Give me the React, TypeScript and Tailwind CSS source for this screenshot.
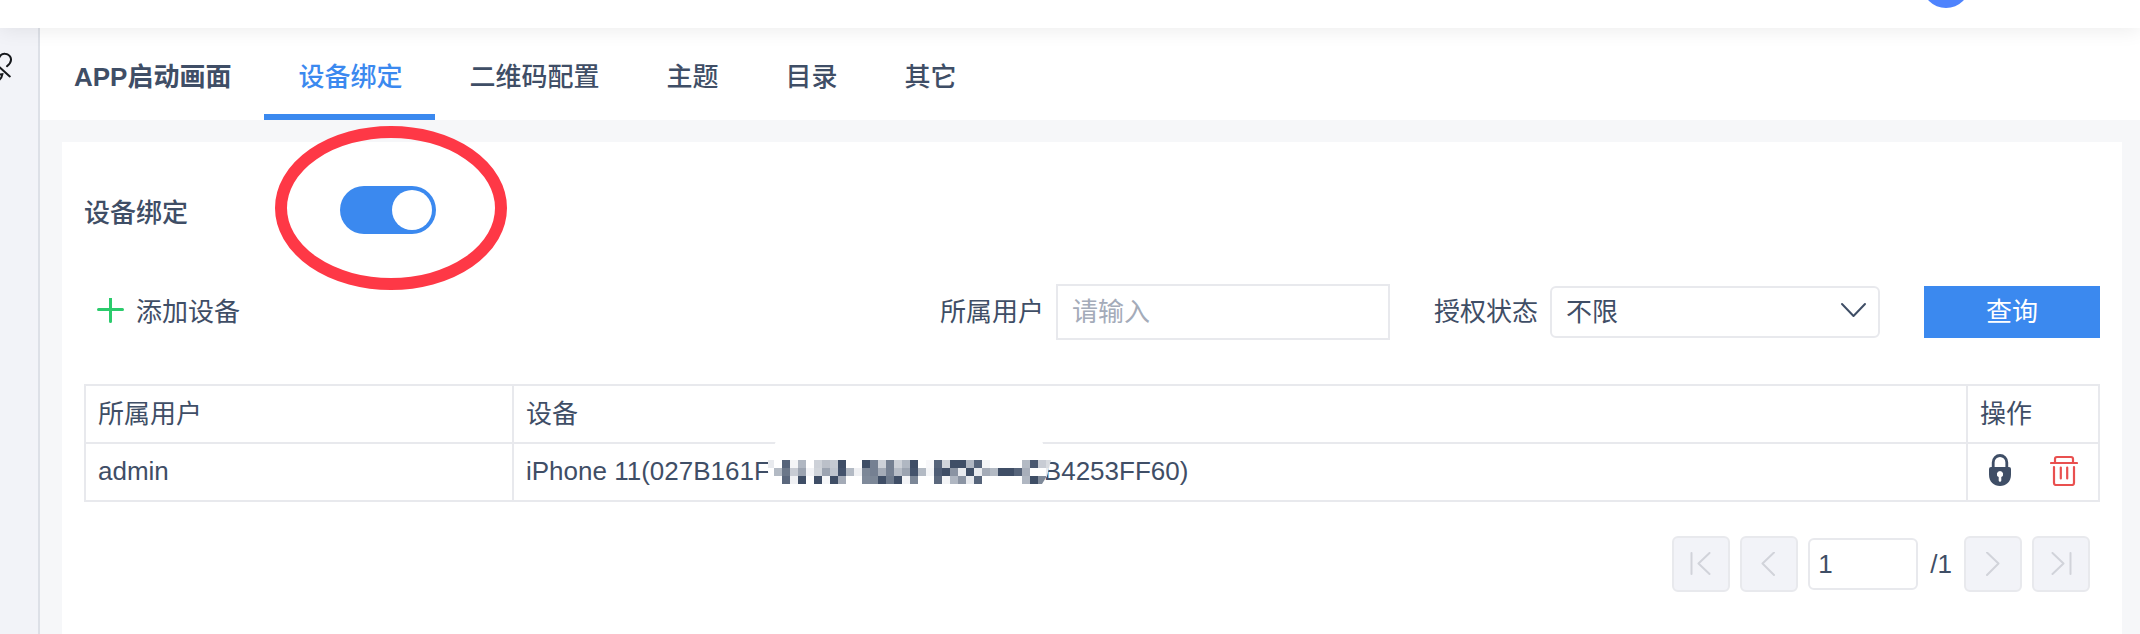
import { useState } from 'react';
import type { ReactNode } from 'react';

const tabs = ['APP启动画面', '设备绑定', '二维码配置', '主题', '目录', '其它'];

const D = '#3f4e66';

// Each entry is one 8px column of the masked serial, top to bottom
const maskColumns = [
  ['#e8eaee', '', ''],
  ['', '#b3bac4', ''],
  ['#56647a', '#6b7789', '#5b687d'],
  ['#f4f5f7', '#c8ccd4', '#f0f1f4'],
  ['#b0b7c2', '#9ca4b1', D],
  ['', '#f3f4f7', ''],
  ['#cdd1d8', '#d0d4da', D],
  ['#bbc0c9', '#9ca4b1', '#f6f7f9'],
  ['#c5cad2', '#bfc5ce', D],
  [D, '#43526b', '#a4abb7'],
  ['', '#b3bac4', ''],
  ['', '#eff0f3', ''],
  [D, '#7c8797', '#7f8a9a'],
  ['#758092', '#758092', '#7c8797'],
  ['#cdd1d8', '#a4abb7', D],
  ['#758092', '#758092', '#6f7b8d'],
  ['#cdd1d8', '#b7bdc7', D],
  ['#b0b7c2', '#9ca4b1', '#f3f4f7'],
  [D, '#44536b', '#7c8797'],
  ['', '#b3bac4', ''],
  ['#f8f8fa', '#f4f5f7', ''],
  ['#56647a', '#4f5d75', '#5b687d'],
  ['#d0d4da', D, '#f4f5f7'],
  [D, '#8b94a3', '#b0b7c2'],
  [D, '#e8eaee', '#8b94a3'],
  ['#b0b7c2', D, '#e8eaee'],
  ['#56647a', '#e8eaee', '#56647a'],
  ['#f4f5f7', '#a4abb7', ''],
  ['', '#b3bac4', ''],
  ['', D, ''],
  ['', D, ''],
  ['', '#56647a', ''],
  ['#b3bac4', '#a8afbb', '#b0b7c2'],
  ['#4a5870', '', D],
  ['#c8ccd4', '', '#7f8a9a'],
  ['#d8dbe0', '#e8eaee', ''],
];

const MaskedSerial = () => (
  <svg
    className="relative -ml-1 -mr-[7px] h-[68px] w-[285px] shrink-0"
    viewBox="0 0 285 68"
    aria-hidden="true"
  >
    <defs>
      <clipPath id="mask-edge">
        <path d="M2 22H285L281 38L276 46H2Z" />
      </clipPath>
    </defs>
    <path d="M10 3H276L283 22L281 38L276 47H6L2 34V22Z" fill="#fff" />
    <g clipPath="url(#mask-edge)" shapeRendering="crispEdges">
      {maskColumns.map((column, i) =>
        column.map((fill, j) =>
          fill ? <rect key={`${i}-${j}`} x={i * 8} y={22 + j * 8} width="8" height="8" fill={fill} /> : null
        )
      )}
    </g>
  </svg>
);

interface PageButtonProps {
  label: string;
  children: ReactNode;
}

const PageButton = ({ label, children }: PageButtonProps) => (
  <button
    aria-label={label}
    className="flex h-14 w-[58px] items-center justify-center rounded-md border-2 border-[#e8e9ed] bg-[#f2f3f8] text-[#d1d3da]"
  >
    <svg
      className="h-6 w-6"
      viewBox="0 0 24 24"
      fill="none"
      stroke="currentColor"
      strokeWidth="2"
      strokeLinecap="round"
      strokeLinejoin="round"
    >
      {children}
    </svg>
  </button>
);

const App = () => {
  const [activeTab, setActiveTab] = useState('设备绑定');
  const [enabled, setEnabled] = useState(true);
  const [owner, setOwner] = useState('');
  const [page, setPage] = useState('1');

  return (
    <div className="flex min-h-screen flex-col overflow-hidden bg-white font-['Liberation_Sans','Noto_Sans_CJK_SC',sans-serif] text-[26px] leading-9 text-[#3f4e66]">
      {/* Top bar */}
      <header className="relative z-10 flex h-7 justify-end bg-white pr-[170px] shadow-[0_2px_20px_rgba(0,0,0,0.08)]">
        <div className="-mt-10 h-12 w-12 rounded-full bg-[#4e83fd]" />
      </header>

      <div className="flex flex-1">
        {/* Sidebar */}
        <aside className="w-10 shrink-0 border-r-2 border-[#dde0e7] bg-[#f2f3f8] pt-[22px]">
          <svg
            className="h-8 w-3"
            viewBox="0 0 12 32"
            fill="none"
            stroke="#16181c"
            strokeWidth="2"
            strokeLinecap="round"
          >
            <path d="M-1 8C0.5 4.5 3 3.6 5 3.8C9 4 11.2 7 11 10C10.9 12.5 9 14.5 7 16.2" />
            <path d="M-1 16.8L9.8 26.4" />
            <path d="M-1 24.6L2.4 24.2C2 27 1 28.5 -0.5 29.6" />
          </svg>
        </aside>

        <main className="min-w-0 flex-1 bg-[#f6f7f9]">
          {/* Tabs */}
          <nav className="flex bg-white">
            {tabs.map((tab) => (
              <button
                key={tab}
                onClick={() => setActiveTab(tab)}
                className={`h-[92px] border-b-[6px] pl-[34px] pr-[33px] pt-3 ${
                  tab.startsWith('APP') ? 'font-bold' : 'font-medium'
                } ${activeTab === tab ? 'border-[#3b89ef] text-[#3b89ef]' : 'border-transparent'}`}
              >
                {tab}
              </button>
            ))}
          </nav>

          <section className="ml-[22px] mr-[18px] mt-[22px] min-h-[492px] bg-white px-[22px] pt-11">
            {/* Binding switch */}
            <div className="flex h-12 items-center">
              <label htmlFor="binding" className="w-64 pt-1.5 font-medium">
                设备绑定
              </label>
              <div className="relative h-12 w-24">
                <input
                  id="binding"
                  type="checkbox"
                  role="switch"
                  checked={enabled}
                  onChange={(e) => setEnabled(e.target.checked)}
                  className="peer h-12 w-24 cursor-pointer appearance-none rounded-full bg-[#c9cdd6] checked:bg-[#3b89ef]"
                />
                <span className="pointer-events-none absolute left-1 top-1 h-10 w-10 rounded-full bg-white peer-checked:left-[52px]" />
                <svg
                  className="pointer-events-none absolute -left-[65px] -top-[60px] h-[164px] w-[232px]"
                  viewBox="0 0 232 164"
                  fill="none"
                >
                  <ellipse cx="116" cy="82" rx="110" ry="76" stroke="#fe3846" strokeWidth="12" />
                </svg>
              </div>
            </div>

            {/* Toolbar */}
            <div className="mt-[50px] flex h-14 items-center justify-between">
              <button className="flex items-center gap-3 px-3">
                <svg
                  className="h-7 w-7"
                  viewBox="0 0 28 28"
                  stroke="#2bcb6c"
                  strokeWidth="3"
                  strokeLinecap="round"
                >
                  <path d="M14.5 -0.5V23.5M2.5 11.5H26.5" />
                </svg>
                添加设备
              </button>

              <div className="flex items-center gap-11">
                <div className="flex items-center gap-3">
                  <label htmlFor="owner">所属用户</label>
                  <input
                    id="owner"
                    value={owner}
                    onChange={(e) => setOwner(e.target.value)}
                    placeholder="请输入"
                    className="h-14 w-[334px] border-2 border-[#e8e9ed] px-3.5 outline-none placeholder:text-[#a4abb9]"
                  />
                </div>
                <div className="flex items-center gap-3">
                  <label htmlFor="status">授权状态</label>
                  <div className="relative">
                    <select
                      id="status"
                      className="block h-[52px] w-[330px] appearance-none rounded-md border-2 border-[#e8e9ed] bg-white px-3.5 outline-none"
                    >
                      <option>不限</option>
                      <option>已授权</option>
                      <option>未授权</option>
                    </select>
                    <svg
                      className="pointer-events-none absolute right-3 top-4 h-4 w-7"
                      viewBox="0 0 28 16"
                      fill="none"
                      stroke="currentColor"
                      strokeWidth="2"
                      strokeLinecap="round"
                      strokeLinejoin="round"
                    >
                      <path d="M2 2L13.5 14L25 2" />
                    </svg>
                  </div>
                </div>
                <button className="h-[52px] w-44 bg-[#3b89ef] text-white">查询</button>
              </div>
            </div>

            {/* Devices */}
            <table className="mt-11 w-full table-fixed border-collapse text-left">
              <colgroup>
                <col className="w-[428px]" />
                <col />
                <col className="w-[132px]" />
              </colgroup>
              <thead>
                <tr className="h-[58px]">
                  <th className="border-2 border-[#e8e9ed] px-3 py-0 font-normal">所属用户</th>
                  <th className="border-2 border-[#e8e9ed] px-3 py-0 font-normal">设备</th>
                  <th className="border-2 border-[#e8e9ed] px-3 py-0 font-normal">操作</th>
                </tr>
              </thead>
              <tbody>
                <tr className="h-[58px]">
                  <td className="border-2 border-[#e8e9ed] px-3 pb-0.5 pt-0">admin</td>
                  <td className="border-2 border-[#e8e9ed] px-3 py-0">
                    <div className="flex h-14 items-center">
                      <span className="pb-0.5">iPhone 11(027B161F</span>
                      <MaskedSerial />
                      <span className="pb-0.5">B4253FF60)</span>
                    </div>
                  </td>
                  <td className="border-2 border-[#e8e9ed] px-5 pb-1 pt-0">
                    <div className="flex items-center justify-between">
                      <button aria-label="锁定">
                        <svg className="block h-8 w-6" viewBox="0 0 24 32" fill="none">
                          <path
                            d="M5.2 14V8.5A6.8 7 0 0 1 18.8 8.5V14"
                            stroke="#3f4e66"
                            strokeWidth="2.8"
                          />
                          <path
                            fillRule="evenodd"
                            fill="#3f4e66"
                            d="M3 13H21Q23 13 23 15V20.5C23 28 18 32 12 32S1 28 1 20.5V15Q1 13 3 13ZM12 17A3.2 3.2 0 0 0 10.7 23.1V26.4A1.3 1.3 0 0 0 13.3 26.4V23.1A3.2 3.2 0 0 0 12 17Z"
                          />
                        </svg>
                      </button>
                      <button aria-label="删除">
                        <svg
                          className="block h-8 w-7"
                          viewBox="0 0 28 32"
                          fill="none"
                          stroke="#e9504f"
                          strokeWidth="2.2"
                          strokeLinecap="round"
                          strokeLinejoin="round"
                        >
                          <path d="M1 9H27M5 9V5Q5 3 7 3H21Q23 3 23 5V9M4 13V29Q4 31 6 31H22Q24 31 24 29V13M10.8 13.5V24.5M17.2 13.5V24.5" />
                        </svg>
                      </button>
                    </div>
                  </td>
                </tr>
              </tbody>
            </table>

            {/* Pagination */}
            <div className="mt-[34px] flex items-center justify-end gap-2.5 pr-2.5">
              <PageButton label="首页">
                <path d="M2.5 1V22M20.5 1L9.5 11.5L20.5 22" />
              </PageButton>
              <PageButton label="上一页">
                <path d="M17 0.5L5.5 11.5L17 23" />
              </PageButton>
              <input
                aria-label="页码"
                value={page}
                onChange={(e) => setPage(e.target.value)}
                className="h-[52px] w-[110px] rounded-md border-2 border-[#e8e9ed] px-2 outline-none"
              />
              <span className="mx-0.5">/1</span>
              <PageButton label="下一页">
                <path d="M6 0.5L17.5 11.5L6 23" />
              </PageButton>
              <PageButton label="末页">
                <path d="M3.5 1L14.5 11.5L3.5 22M21.5 1V22" />
              </PageButton>
            </div>
          </section>
        </main>
      </div>
    </div>
  );
};

export default App;
